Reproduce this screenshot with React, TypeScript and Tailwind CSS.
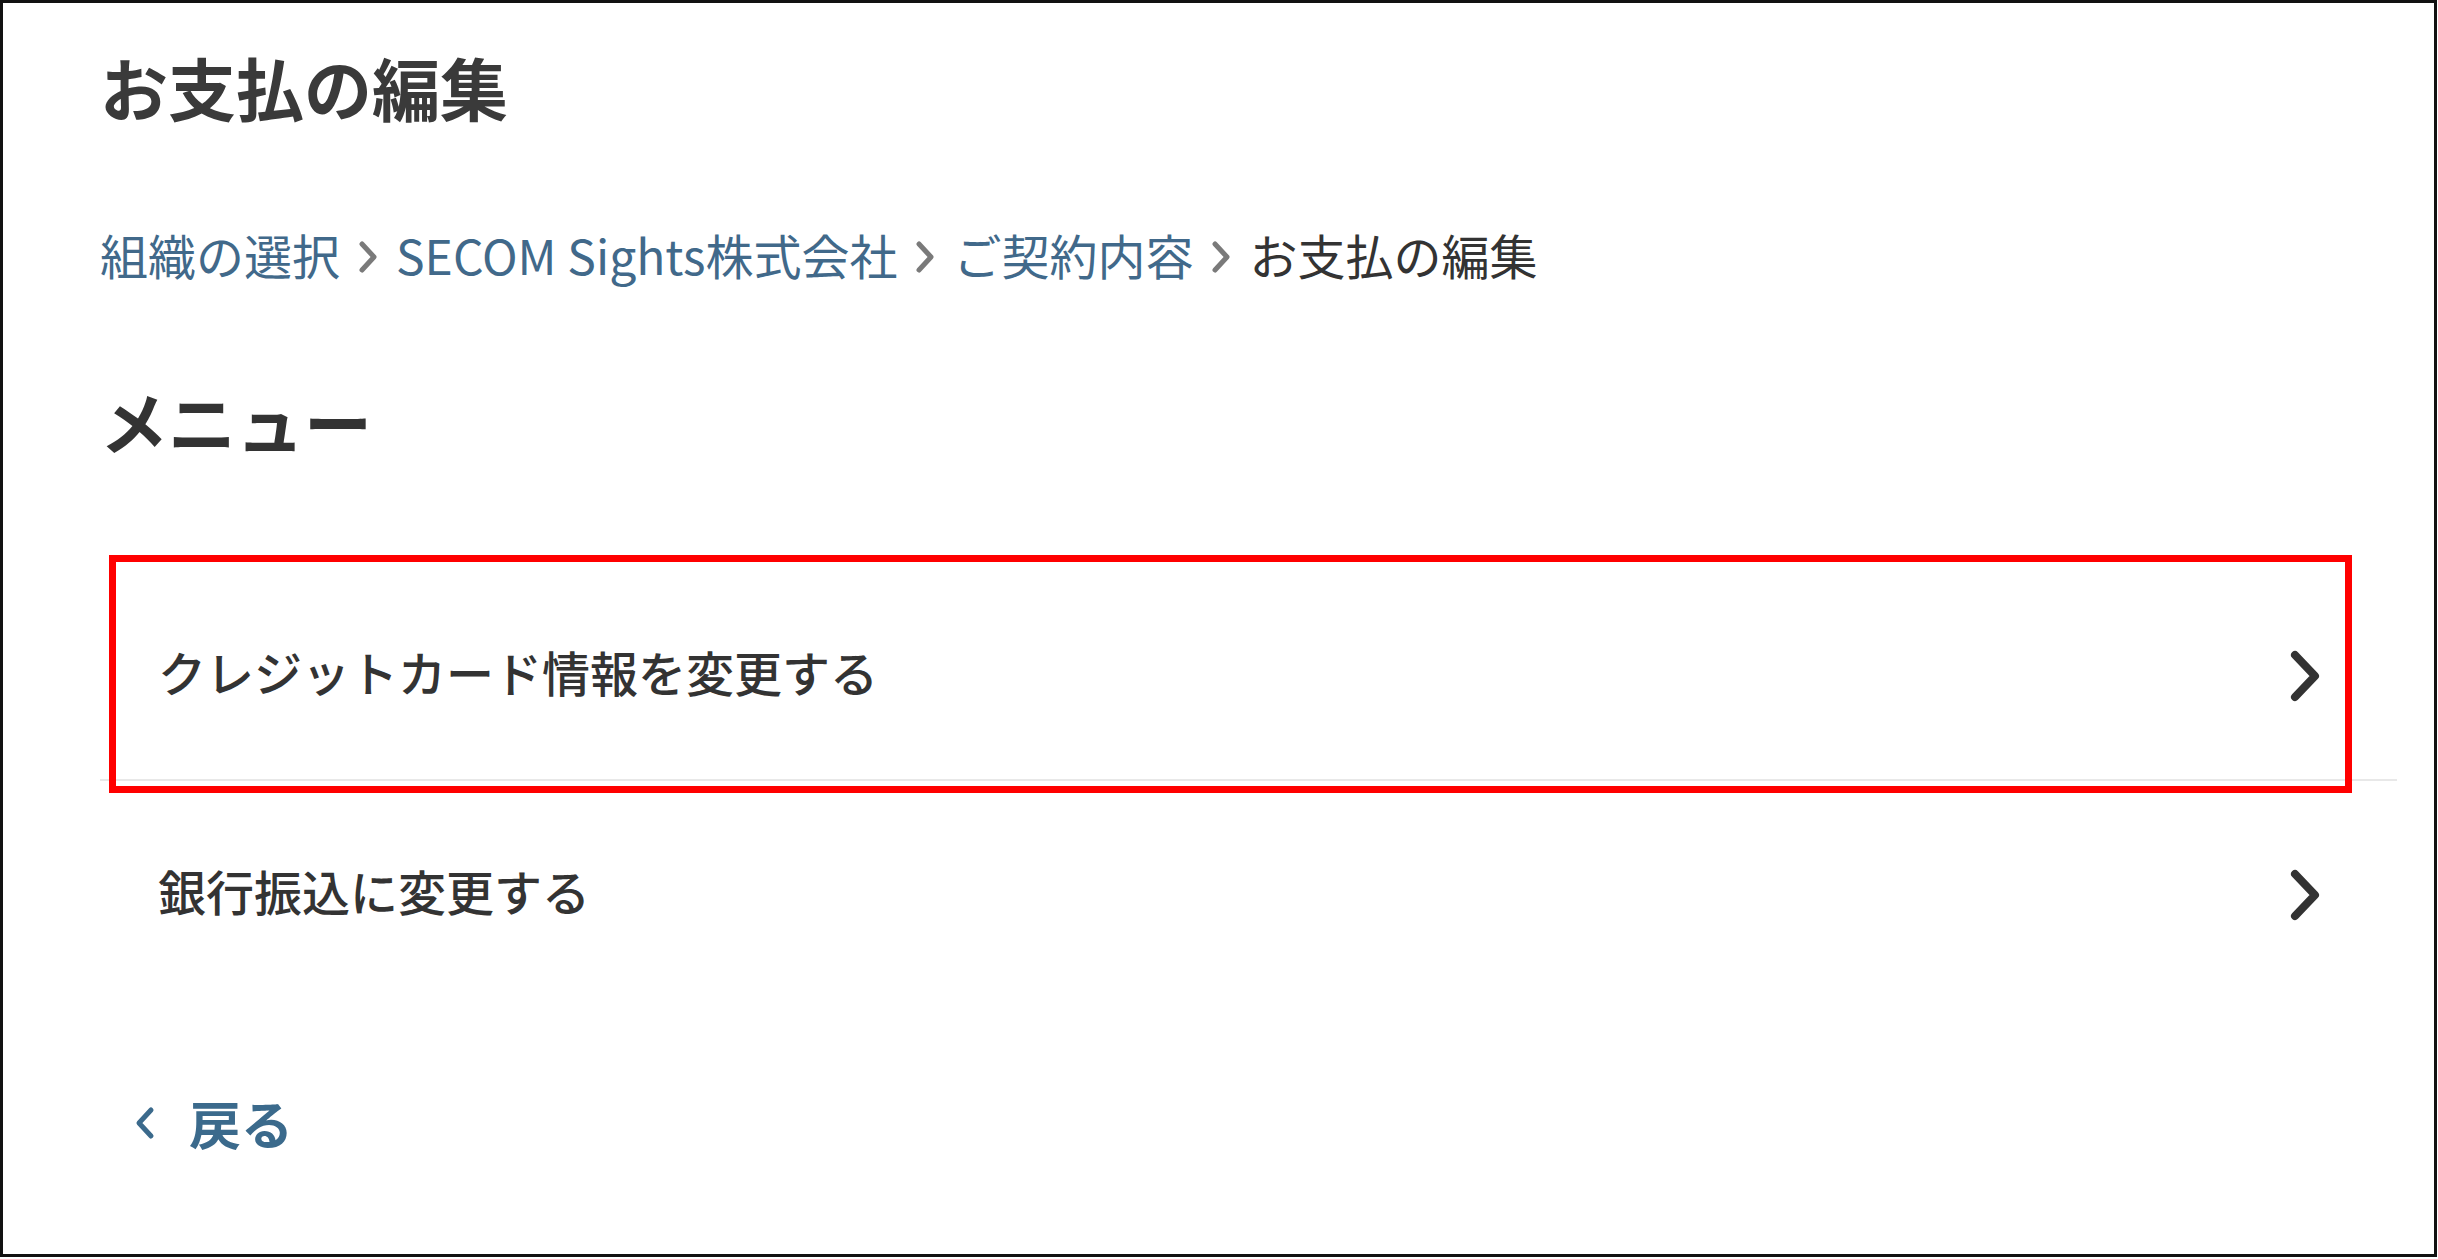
import React from 'react';

const crumbs = [
  { label: '組織の選択', link: true },
  { label: 'SECOM Sights株式会社', link: true },
  { label: 'ご契約内容', link: true },
  { label: 'お支払の編集', link: false },
];

const menuItems = [
  { label: 'クレジットカード情報を変更する', highlighted: true },
  { label: '銀行振込に変更する', highlighted: false },
];

const CrumbChevron = () => (
  <svg width="22" height="34" viewBox="0 0 22 34" className="mt-[6px] shrink-0">
    <path d="M5 4 L17 17 L5 30" fill="none" stroke="#7a7a7a" strokeWidth="5" strokeLinecap="round" strokeLinejoin="round" />
  </svg>
);

const RowChevron = () => (
  <svg width="30" height="52" viewBox="0 0 30 52" className="mt-[10px] shrink-0">
    <path d="M5 5 L25 26 L5 47" fill="none" stroke="#333333" strokeWidth="8" strokeLinecap="round" strokeLinejoin="round" />
  </svg>
);

const BackChevron = () => (
  <svg width="22" height="34" viewBox="0 0 22 34" className="shrink-0">
    <path d="M17 4 L5 17 L17 30" fill="none" stroke="#3b6a8c" strokeWidth="5" strokeLinecap="round" strokeLinejoin="round" />
  </svg>
);

export default function App() {
  return (
    <div className="w-[2438px] h-[1259px] bg-white font-['Noto_Sans_CJK_JP','Noto_Sans',sans-serif]">
      <div className="relative w-[2437px] h-[1257px] border-[3px] border-[#111] bg-white pl-[97px] pr-[37px] pt-[50px]">
        <h1 className="text-[68px] leading-[68px] font-bold text-[#3a3a3a]">お支払の編集</h1>

        {/* breadcrumb */}
        <nav className="mt-[109px] flex items-center gap-[17px] text-[48px] leading-[48px]">
          {crumbs.map((c, i) => (
            <React.Fragment key={i}>
              {i > 0 && <CrumbChevron />}
              <span className={c.link ? 'text-[#41698a]' : 'text-[#333333]'}>{c.label}</span>
            </React.Fragment>
          ))}
        </nav>

        <h2 className="mt-[109px] text-[68px] leading-[68px] font-bold text-[#333333]">メニュー</h2>

        <div className="mt-[108px]">
          {menuItems.map((item, i) => (
            <div
              key={i}
              className={`relative flex items-center justify-between h-[218px] pl-[58px] pr-[77px] ${
                i === 0 ? 'border-b-2 border-[#e8e8e8]' : ''
              }`}
            >
              <span className="text-[48px] leading-[48px] font-medium text-[#333333]">{item.label}</span>
              <RowChevron />
              {item.highlighted && (
                <div className="absolute -top-[8px] left-[9px] w-[2243px] h-[238px] border-[7px] border-[#ff0000] pointer-events-none" />
              )}
            </div>
          ))}
        </div>

        <a className="mt-[98px] ml-[34px] inline-flex items-center gap-[33px] text-[#3b6a8c] cursor-pointer">
          <BackChevron />
          <span className="text-[52px] leading-[52px] font-bold">戻る</span>
        </a>
      </div>
    </div>
  );
}
